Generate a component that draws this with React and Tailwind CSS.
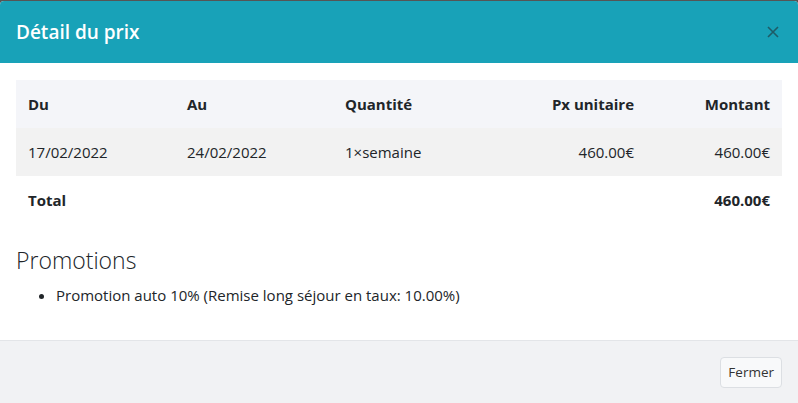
import React from 'react';

const rows = [
  { du: '17/02/2022', au: '24/02/2022', qte: '1×semaine', px: '460.00€', montant: '460.00€' },
];

const App = () => {
  return (
    <div className="w-[798px] h-[403px] bg-[#555] pt-px overflow-hidden" style={{ fontFamily: '"Open Sans", "Noto Sans", sans-serif' }}>
      <div className="h-[402px] bg-white rounded-t-[4px] flex flex-col text-[#212529]">
        {/* Header */}
        <div className="h-[62px] bg-[#18a2b8] rounded-t-[4px] flex items-center justify-between pl-4 pr-[19px]">
          <h5 className="text-white text-[19px] font-semibold">Détail du prix</h5>
          <button className="text-[#1e5c67]">
            <svg width="12" height="12" viewBox="0 0 12 12">
              <path d="M1 1L11 11M11 1L1 11" stroke="currentColor" strokeWidth="1.6" />
            </svg>
          </button>
        </div>

        {/* Body */}
        <div className="flex-1 px-4 pt-[17px]">
          <table className="w-[766px] text-[15px] border-collapse">
            <thead>
              <tr className="bg-[#f4f5f9] h-[48px]">
                <th className="w-[159px] text-left font-bold px-3">Du</th>
                <th className="w-[158px] text-left font-bold px-3">Au</th>
                <th className="w-[157px] text-left font-bold px-3">Quantité</th>
                <th className="w-[156px] text-right font-bold px-3">Px unitaire</th>
                <th className="w-[136px] text-right font-bold px-3">Montant</th>
              </tr>
            </thead>
            <tbody>
              {rows.map((r, i) => (
                <tr key={i} className="bg-[#f2f2f2] h-[48px]">
                  <td className="px-3">{r.du}</td>
                  <td className="px-3">{r.au}</td>
                  <td className="px-3">{r.qte}</td>
                  <td className="px-3 text-right">{r.px}</td>
                  <td className="px-3 text-right">{r.montant}</td>
                </tr>
              ))}
              <tr className="h-[48px]">
                <td className="px-3 font-bold">Total</td>
                <td></td>
                <td></td>
                <td></td>
                <td className="px-3 text-right font-bold">460.00€</td>
              </tr>
            </tbody>
          </table>

          <h4 className="mt-[21px] text-[23px] font-light leading-[30px]">Promotions</h4>
          <ul className="list-disc pl-10 mt-[9px] text-[15px] leading-[22px]">
            <li>Promotion auto 10% (Remise long séjour en taux: 10.00%)</li>
          </ul>
        </div>

        {/* Footer */}
        <div className="h-[63px] bg-[#f1f2f4] border-t border-[#e3e5e8] flex items-center justify-end px-4">
          <button className="h-[31px] px-[7px] text-[13.5px] text-[#333] bg-[#f8f9fa] border border-[#dcdfe3] rounded-[4px]">
            Fermer
          </button>
        </div>
      </div>
    </div>
  );
};

export default App;
